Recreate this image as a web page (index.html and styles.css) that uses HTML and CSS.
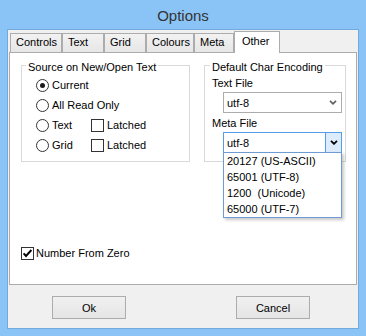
FILE: index.html
```html
<!DOCTYPE html>
<html>
<head>
<meta charset="utf-8">
<link rel="stylesheet" href="styles.css">
</head>
<body>
<div class="window">
  <div class="titlebar">Options</div>
  <div class="client">
    <div class="tabs">
      <div class="tab tab-controls">Controls</div>
      <div class="tab tab-text">Text</div>
      <div class="tab tab-grid">Grid</div>
      <div class="tab tab-colours">Colours</div>
      <div class="tab tab-meta">Meta</div>
      <div class="tab tab-other active">Other</div>
    </div>
    <div class="pane">
      <div class="groups">
        <fieldset class="group group-source">
          <legend class="legend-source">Source on New/Open Text</legend>
          <div class="opts">
            <div class="opt span2"><span class="rb on"></span>Current</div>
            <div class="opt span2"><span class="rb"></span>All Read Only</div>
            <div class="opt"><span class="rb"></span>Text</div>
            <div class="opt"><span class="cb"></span>Latched</div>
            <div class="opt"><span class="rb"></span>Grid</div>
            <div class="opt"><span class="cb"></span>Latched</div>
          </div>
        </fieldset>
        <fieldset class="group group-enc">
          <legend class="legend-enc">Default Char Encoding</legend>
          <div class="enc-body">
            <div class="field-label">Text File</div>
            <div class="combo">
              <span class="val">utf-8</span>
              <span class="drop"><svg width="8" height="5" viewBox="0 0 8 5"><polyline points="1,0.8 4,3.8 7,0.8" fill="none" stroke="#606060" stroke-width="1.7"/></svg></span>
            </div>
            <div class="field-label label-meta">Meta File</div>
            <div class="combo open">
              <span class="val">utf-8</span>
              <span class="drop"><svg width="8" height="5" viewBox="0 0 8 5"><polyline points="1,0.8 4,3.8 7,0.8" fill="none" stroke="#000" stroke-width="1.8"/></svg></span>
              <ul class="droplist">
                <li>20127 (US-ASCII)</li>
                <li>65001 (UTF-8)</li>
                <li>1200&nbsp; (Unicode)</li>
                <li>65000 (UTF-7)</li>
              </ul>
            </div>
          </div>
        </fieldset>
      </div>
      <div class="check-row"><span class="cb checked"><svg width="11" height="11" viewBox="0 0 11 11"><polyline points="1.6,5.4 4,8 9.4,2" fill="none" stroke="#000" stroke-width="1.9"/></svg></span>Number From Zero</div>
    </div>
    <div class="buttons">
      <button class="dlg-btn">Ok</button>
      <button class="dlg-btn">Cancel</button>
    </div>
  </div>
</div>
</body>
</html>
```
FILE: styles.css
```css
html, body {
  margin: 0;
  padding: 0;
}
body {
  font-family: "Liberation Sans", Arial, sans-serif;
  font-size: 11px;
  color: #000;
}
.window {
  width: 366px;
  height: 336px;
  background: #8ac4f7;
  display: flex;
  flex-direction: column;
  box-sizing: border-box;
}
.titlebar {
  height: 29px;
  box-sizing: border-box;
  padding-top: 2px;
  line-height: 28px;
  text-align: center;
  font-size: 15px;
  color: #333;
}
.client {
  margin: 0 7px 7px;
  flex: 1;
  background: #f0f0f0;
  border: 1px solid #74a9dc;
  display: flex;
  flex-direction: column;
}
.tabs {
  display: flex;
  align-items: flex-end;
  padding: 1px 0 0 2px;
}
.tab {
  height: 19px;
  box-sizing: border-box;
  border: 1px solid #acacac;
  border-bottom: none;
  background: linear-gradient(#f2f2f2, #e6e6e6);
  padding-left: 5px;
  line-height: 17px;
}
.tab-controls { width: 52px; }
.tab-text { width: 42px; }
.tab-grid { width: 42px; }
.tab-colours { width: 48px; }
.tab-meta { width: 40px; }
.tab-other { width: 46px; }
.tab.active {
  height: 22px;
  margin-bottom: -1px;
  background: #fff;
  padding-left: 7px;
  line-height: 18px;
  position: relative;
  z-index: 1;
}
.pane {
  margin-left: 1px;
  width: 348px;
  height: 233px;
  box-sizing: border-box;
  border: 1px solid #acacac;
  background: #fff;
  padding: 3px 0 0 11px;
}
.groups {
  display: flex;
  align-items: stretch;
}
.group {
  margin: 0;
  padding: 0 0 5px 0;
  border: 1px solid #d9d9d9;
  min-width: 0;
  box-sizing: border-box;
}
.group-source { width: 169px; }
.group-enc { width: 142px; margin-left: 14px; padding-bottom: 8px; }
legend {
  padding: 4px 2px 0;
  line-height: 14px;
}
.legend-source { margin-left: 4px; }
.legend-enc { margin-left: 5px; }
.opts {
  display: grid;
  grid-template-columns: 55px auto;
  grid-auto-rows: 20px;
  margin: 1px 0 0 14px;
}
.opt {
  display: flex;
  align-items: center;
  gap: 3px;
}
.span2 { grid-column: span 2; }
.rb {
  width: 13px;
  height: 13px;
  box-sizing: border-box;
  border: 1px solid #333;
  border-radius: 50%;
  background: #fff;
  display: grid;
  place-items: center;
}
.rb.on::after {
  content: "";
  width: 5px;
  height: 5px;
  border-radius: 50%;
  background: #1a1a1a;
}
.cb {
  width: 13px;
  height: 13px;
  box-sizing: border-box;
  border: 1px solid #333;
  background: #fff;
  display: grid;
  place-items: center;
}
.enc-body {
  padding: 2px 0 0 7px;
}
.field-label {
  line-height: 14px;
}
.label-meta { margin-top: 3px; }
.combo {
  position: relative;
  width: 119px;
  height: 21px;
  margin: 2px 0 0 11px;
  border: 1px solid #acacac;
  background: #fff;
  box-sizing: border-box;
  display: flex;
  align-items: center;
}
.combo .val {
  flex: 1;
  padding-left: 3px;
}
.combo .drop {
  width: 16px;
  align-self: stretch;
  box-sizing: border-box;
  display: grid;
  place-items: center;
}
.combo.open {
  border-color: #569de5;
}
.combo.open .drop {
  background: #dcecfc;
  border-left: 1px solid #569de5;
}
.droplist {
  position: absolute;
  top: 100%;
  left: -1px;
  width: 119px;
  box-sizing: border-box;
  margin: 0;
  padding: 0;
  list-style: none;
  background: #fff;
  border: 1px solid #6f9bd3;
  box-shadow: 2px 2px 3px rgba(0, 0, 0, 0.22);
  z-index: 2;
}
.droplist li {
  line-height: 16px;
  padding-left: 3px;
}
.check-row {
  display: flex;
  align-items: center;
  gap: 2px;
  margin-top: 84px;
  line-height: 14px;
}
.buttons {
  display: flex;
  gap: 110px;
  padding-left: 44px;
  margin-top: 11px;
}
.dlg-btn {
  width: 74px;
  height: 23px;
  border: 1px solid #acacac;
  background: linear-gradient(#f0f0f0, #e5e5e5);
  font: inherit;
  color: #000;
  padding: 0;
}
```
